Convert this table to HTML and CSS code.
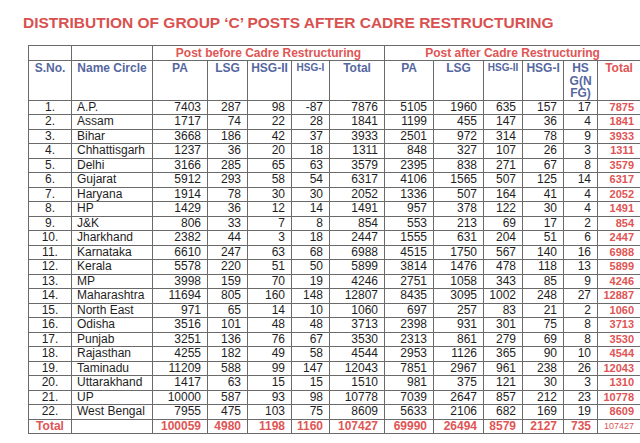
FILE: index.html
```html
<!DOCTYPE html>
<html>
<head>
<meta charset="utf-8">
<link rel="stylesheet" href="styles.css">
</head>
<body>
<div class="page">
  <h1 class="title">DISTRIBUTION OF GROUP ‘C’ POSTS AFTER CADRE RESTRUCTURING</h1>
  <table class="grid">
    <colgroup>
      <col class="c-sno"><col class="c-name"><col class="c-pa1"><col class="c-lsg1"><col class="c-h2a"><col class="c-h1a"><col class="c-tot1">
      <col class="c-pa2"><col class="c-lsg2"><col class="c-h2b"><col class="c-h1b"><col class="c-hs"><col class="c-tot2">
    </colgroup>
    <thead>
      <tr class="group-row">
        <th></th><th></th>
        <th colspan="5" class="group">Post before Cadre Restructuring</th>
        <th colspan="6" class="group">Post after Cadre Restructuring</th>
      </tr>
      <tr class="label-row">
        <th>S.No.</th><th>Name Circle</th><th>PA</th><th>LSG</th><th>HSG-II</th><th class="sm">HSG-I</th><th>Total</th>
        <th>PA</th><th>LSG</th><th class="sm">HSG-II</th><th>HSG-I</th><th>HS<br>G(N<br>FG)</th><th class="red">Total</th>
      </tr>
    </thead>
    <tbody>
      <tr><td class="sno">1.</td><td class="name">A.P.</td><td>7403</td><td>287</td><td>98</td><td>-87</td><td>7876</td><td>5105</td><td>1960</td><td>635</td><td>157</td><td>17</td><td class="tot">7875</td></tr>
      <tr><td class="sno">2.</td><td class="name">Assam</td><td>1717</td><td>74</td><td>22</td><td>28</td><td>1841</td><td>1199</td><td>455</td><td>147</td><td>36</td><td>4</td><td class="tot">1841</td></tr>
      <tr><td class="sno">3.</td><td class="name">Bihar</td><td>3668</td><td>186</td><td>42</td><td>37</td><td>3933</td><td>2501</td><td>972</td><td>314</td><td>78</td><td>9</td><td class="tot">3933</td></tr>
      <tr><td class="sno">4.</td><td class="name">Chhattisgarh</td><td>1237</td><td>36</td><td>20</td><td>18</td><td>1311</td><td>848</td><td>327</td><td>107</td><td>26</td><td>3</td><td class="tot">1311</td></tr>
      <tr><td class="sno">5.</td><td class="name">Delhi</td><td>3166</td><td>285</td><td>65</td><td>63</td><td>3579</td><td>2395</td><td>838</td><td>271</td><td>67</td><td>8</td><td class="tot">3579</td></tr>
      <tr><td class="sno">6.</td><td class="name">Gujarat</td><td>5912</td><td>293</td><td>58</td><td>54</td><td>6317</td><td>4106</td><td>1565</td><td>507</td><td>125</td><td>14</td><td class="tot">6317</td></tr>
      <tr><td class="sno">7.</td><td class="name">Haryana</td><td>1914</td><td>78</td><td>30</td><td>30</td><td>2052</td><td>1336</td><td>507</td><td>164</td><td>41</td><td>4</td><td class="tot">2052</td></tr>
      <tr><td class="sno">8.</td><td class="name">HP</td><td>1429</td><td>36</td><td>12</td><td>14</td><td>1491</td><td>957</td><td>378</td><td>122</td><td>30</td><td>4</td><td class="tot">1491</td></tr>
      <tr><td class="sno">9.</td><td class="name">J&amp;K</td><td>806</td><td>33</td><td>7</td><td>8</td><td>854</td><td>553</td><td>213</td><td>69</td><td>17</td><td>2</td><td class="tot">854</td></tr>
      <tr><td class="sno">10.</td><td class="name">Jharkhand</td><td>2382</td><td>44</td><td>3</td><td>18</td><td>2447</td><td>1555</td><td>631</td><td>204</td><td>51</td><td>6</td><td class="tot">2447</td></tr>
      <tr><td class="sno">11.</td><td class="name">Karnataka</td><td>6610</td><td>247</td><td>63</td><td>68</td><td>6988</td><td>4515</td><td>1750</td><td>567</td><td>140</td><td>16</td><td class="tot">6988</td></tr>
      <tr><td class="sno">12.</td><td class="name">Kerala</td><td>5578</td><td>220</td><td>51</td><td>50</td><td>5899</td><td>3814</td><td>1476</td><td>478</td><td>118</td><td>13</td><td class="tot">5899</td></tr>
      <tr><td class="sno">13.</td><td class="name">MP</td><td>3998</td><td>159</td><td>70</td><td>19</td><td>4246</td><td>2751</td><td>1058</td><td>343</td><td>85</td><td>9</td><td class="tot">4246</td></tr>
      <tr><td class="sno">14.</td><td class="name">Maharashtra</td><td>11694</td><td>805</td><td>160</td><td>148</td><td>12807</td><td>8435</td><td>3095</td><td>1002</td><td>248</td><td>27</td><td class="tot">12887</td></tr>
      <tr><td class="sno">15.</td><td class="name">North East</td><td>971</td><td>65</td><td>14</td><td>10</td><td>1060</td><td>697</td><td>257</td><td>83</td><td>21</td><td>2</td><td class="tot">1060</td></tr>
      <tr><td class="sno">16.</td><td class="name">Odisha</td><td>3516</td><td>101</td><td>48</td><td>48</td><td>3713</td><td>2398</td><td>931</td><td>301</td><td>75</td><td>8</td><td class="tot">3713</td></tr>
      <tr><td class="sno">17.</td><td class="name">Punjab</td><td>3251</td><td>136</td><td>76</td><td>67</td><td>3530</td><td>2313</td><td>861</td><td>279</td><td>69</td><td>8</td><td class="tot">3530</td></tr>
      <tr><td class="sno">18.</td><td class="name">Rajasthan</td><td>4255</td><td>182</td><td>49</td><td>58</td><td>4544</td><td>2953</td><td>1126</td><td>365</td><td>90</td><td>10</td><td class="tot">4544</td></tr>
      <tr><td class="sno">19.</td><td class="name">Taminadu</td><td>11209</td><td>588</td><td>99</td><td>147</td><td>12043</td><td>7851</td><td>2967</td><td>961</td><td>238</td><td>26</td><td class="tot">12043</td></tr>
      <tr><td class="sno">20.</td><td class="name">Uttarakhand</td><td>1417</td><td>63</td><td>15</td><td>15</td><td>1510</td><td>981</td><td>375</td><td>121</td><td>30</td><td>3</td><td class="tot">1310</td></tr>
      <tr><td class="sno">21.</td><td class="name">UP</td><td>10000</td><td>587</td><td>93</td><td>98</td><td>10778</td><td>7039</td><td>2647</td><td>857</td><td>212</td><td>23</td><td class="tot">10778</td></tr>
      <tr><td class="sno">22.</td><td class="name">West Bengal</td><td>7955</td><td>475</td><td>103</td><td>75</td><td>8609</td><td>5633</td><td>2106</td><td>682</td><td>169</td><td>19</td><td class="tot">8609</td></tr>
      <tr class="total-row"><td class="sno">Total</td><td class="name"></td><td>100059</td><td>4980</td><td>1198</td><td>1160</td><td>107427</td><td>69990</td><td>26494</td><td>8579</td><td>2127</td><td>735</td><td class="tot tiny">107427</td></tr>
    </tbody>
  </table>
</div>
</body>
</html>
```

FILE: styles.css
```css
html, body {
  margin: 0;
  padding: 0;
  background: #ffffff;
  overflow: hidden;
}

.page {
  display: flex;
  flex-direction: column;
  align-items: flex-start;
  padding-top: 14px;
  gap: 13px;
  font-family: "Liberation Sans", Arial, sans-serif;
}

.title {
  margin: 0 0 0 23px;
  font-size: 15.5px;
  line-height: 18px;
  font-weight: bold;
  color: #d9514f;
  white-space: nowrap;
}

.grid {
  margin-left: 28px;
  border-collapse: collapse;
  table-layout: fixed;
  width: 612px;
  color: #1e1e1e;
  font-size: 12px;
}

.c-sno { width: 43px; }
.c-name { width: 81px; }
.c-pa1 { width: 55px; }
.c-lsg1 { width: 40px; }
.c-h2a { width: 44px; }
.c-h1a { width: 38px; }
.c-tot1 { width: 55px; }
.c-pa2 { width: 49px; }
.c-lsg2 { width: 50px; }
.c-h2b { width: 39px; }
.c-h1b { width: 41px; }
.c-hs { width: 34px; }
.c-tot2 { width: 43px; }

.grid th,
.grid td {
  border: 1px solid #6a6a6a;
  padding: 0;
  overflow: hidden;
  white-space: nowrap;
}

.group-row th {
  height: 14px;
  line-height: 14px;
  font-size: 12px;
  font-weight: bold;
  color: #e05555;
  text-align: center;
  vertical-align: middle;
}

.label-row th {
  height: 36px;
  padding-top: 1px;
  font-size: 12px;
  line-height: 12.5px;
  font-weight: bold;
  color: #56679f;
  text-align: center;
  vertical-align: top;
}

.label-row th.sm {
  font-size: 10px;
}

.label-row th.red {
  color: #e05555;
}

.grid tbody tr {
  height: 14.5px;
}

.grid td {
  line-height: 13px;
  text-align: right;
  padding-right: 6px;
  vertical-align: middle;
}

.grid td.sno {
  text-align: center;
  padding-right: 0;
}

.grid td.name {
  text-align: left;
  padding-left: 5px;
  padding-right: 0;
}

.grid td.tot {
  color: #e05555;
  font-weight: bold;
  font-size: 11px;
  padding-right: 6px;
}

.total-row td {
  color: #e05555;
  font-weight: bold;
}

.total-row td.tiny {
  font-size: 9px;
  font-weight: normal;
  vertical-align: top;
}
```
